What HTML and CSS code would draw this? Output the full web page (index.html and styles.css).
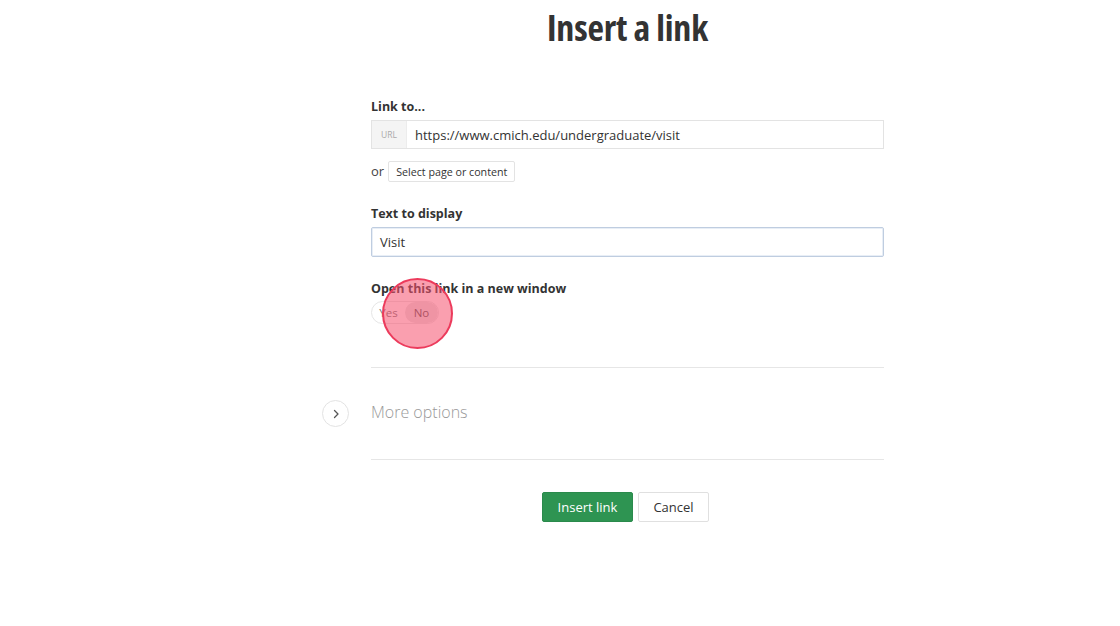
FILE: index.html
```html
<!DOCTYPE html>
<html>
<head>
<meta charset="utf-8">
<link rel="stylesheet" href="styles.css">
</head>
<body>
<div class="page">
  <h1 class="title">Insert a link</h1>
  <div class="form">
    <div class="field">
      <label class="label">Link to...</label>
      <div class="url-input">
        <span class="prefix">URL</span>
        <span class="value">https://www.cmich.edu/undergraduate/visit</span>
      </div>
      <div class="or-row">
        <span class="or">or</span>
        <button class="small-btn">Select page or content</button>
      </div>
    </div>
    <div class="field field-text">
      <label class="label">Text to display</label>
      <div class="text-input">Visit</div>
    </div>
    <div class="field field-toggle">
      <label class="label">Open this link in a new window</label>
      <div class="toggle-wrap">
        <div class="toggle">
          <span class="opt">Yes</span>
          <span class="opt opt-on">No</span>
        </div>
        <span class="click-marker"></span>
      </div>
    </div>
    <div class="more">
      <span class="more-btn">
        <svg width="10" height="10" viewBox="0 0 10 10"><path d="M3.5 1.5 L7 5 L3.5 8.5" fill="none" stroke="#555" stroke-width="1.3" stroke-linecap="round" stroke-linejoin="round"/></svg>
      </span>
      <span class="more-text">More options</span>
    </div>
    <div class="actions">
      <button class="btn btn-primary">Insert link</button>
      <button class="btn btn-default">Cancel</button>
    </div>
  </div>
</div>
</body>
</html>
```

FILE: styles.css
```css
html, body {
  margin: 0;
  padding: 0;
  background: #fff;
}
body {
  font-family: "Open Sans", "Liberation Sans", sans-serif;
  color: #333;
}
.page {
  width: 1120px;
  box-sizing: border-box;
  padding-left: 135px;
  display: flex;
  flex-direction: column;
  align-items: center;
}
.title {
  margin: 5px 0 0 0;
  font-family: "Open Sans", "DejaVu Sans", sans-serif;
  font-stretch: 75%;
  font-weight: 700;
  font-size: 36px;
  line-height: 46px;
  color: #333;
  letter-spacing: -0.2px;
}
.form {
  width: 513px;
  margin-top: 48px;
  display: flex;
  flex-direction: column;
}
.label {
  display: block;
  font-size: 12.5px;
  font-weight: 700;
  color: #333;
  line-height: 16px;
  margin-bottom: 5px;
}
.url-input {
  height: 27px;
  border: 1px solid #e3e3e3;
  display: flex;
  align-items: center;
}
.prefix {
  width: 34px;
  height: 100%;
  background: #f4f4f4;
  color: #aaa;
  font-size: 8.5px;
  display: flex;
  align-items: center;
  justify-content: center;
  border-right: 1px solid #ececec;
}
.value {
  font-size: 13px;
  padding-left: 8px;
  color: #333;
}
.or-row {
  display: flex;
  align-items: center;
  margin-top: 12px;
}
.or {
  font-size: 13px;
  color: #444;
  margin-right: 4px;
  position: relative;
  top: -1px;
}
.small-btn {
  height: 21px;
  padding: 0 7px;
  border: 1px solid #e3e3e3;
  background: #fff;
  font-family: "Open Sans", "Liberation Sans", sans-serif;
  font-size: 10.7px;
  color: #333;
  border-radius: 2px;
}
.field-text {
  margin-top: 24px;
}
.text-input {
  height: 28px;
  border: 1px solid #bfcde0;
  border-radius: 2px;
  box-shadow: inset 0 0 0 1px #e8eef6;
  font-size: 13px;
  line-height: 28px;
  padding-left: 8px;
  color: #333;
}
.field-toggle {
  margin-top: 24px;
}
.field-toggle .label {
  margin-bottom: 3px;
}
.toggle-wrap {
  position: relative;
  height: 24px;
}
.toggle {
  display: inline-flex;
  height: 23px;
  border: 1px solid #e6e6e6;
  border-radius: 12px;
  overflow: hidden;
  box-sizing: border-box;
}
.opt {
  width: 33px;
  display: flex;
  align-items: center;
  justify-content: center;
  font-size: 11.5px;
  color: #777;
}
.opt-on {
  background: #e6e6e6;
  border-radius: 12px;
  color: #555;
}
.click-marker {
  position: absolute;
  left: 11px;
  top: -22px;
  width: 71px;
  height: 71px;
  border-radius: 50%;
  background: rgba(245, 80, 110, 0.55);
  border: 2.5px solid #ec3b5c;
  box-sizing: border-box;
}
.more {
  margin-top: 43px;
  border-top: 1px solid #e6e6e6;
  border-bottom: 1px solid #e6e6e6;
  height: 91px;
  display: flex;
  align-items: center;
  position: relative;
}
.more-btn {
  position: absolute;
  left: -49px;
  top: 32px;
  width: 25px;
  height: 25px;
  border: 1px solid #e3e3e3;
  border-radius: 50%;
  display: flex;
  align-items: center;
  justify-content: center;
  background: #fff;
}
.more-text {
  font-size: 16px;
  font-weight: 300;
  color: #999;
  position: relative;
  top: -2px;
}
.actions {
  margin-top: 32px;
  display: flex;
  justify-content: center;
  gap: 5px;
  padding-right: 4px;
}
.btn {
  height: 30px;
  font-family: "Open Sans", "Liberation Sans", sans-serif;
  font-size: 13px;
  border-radius: 2px;
  padding: 0;
  white-space: nowrap;
}
.btn-primary {
  background: #2e9452;
  border: 1px solid #2a8a4c;
  color: #fff;
  width: 91px;
}
.btn-default {
  background: #fff;
  border: 1px solid #e0e0e0;
  color: #333;
  width: 71px;
}
```
